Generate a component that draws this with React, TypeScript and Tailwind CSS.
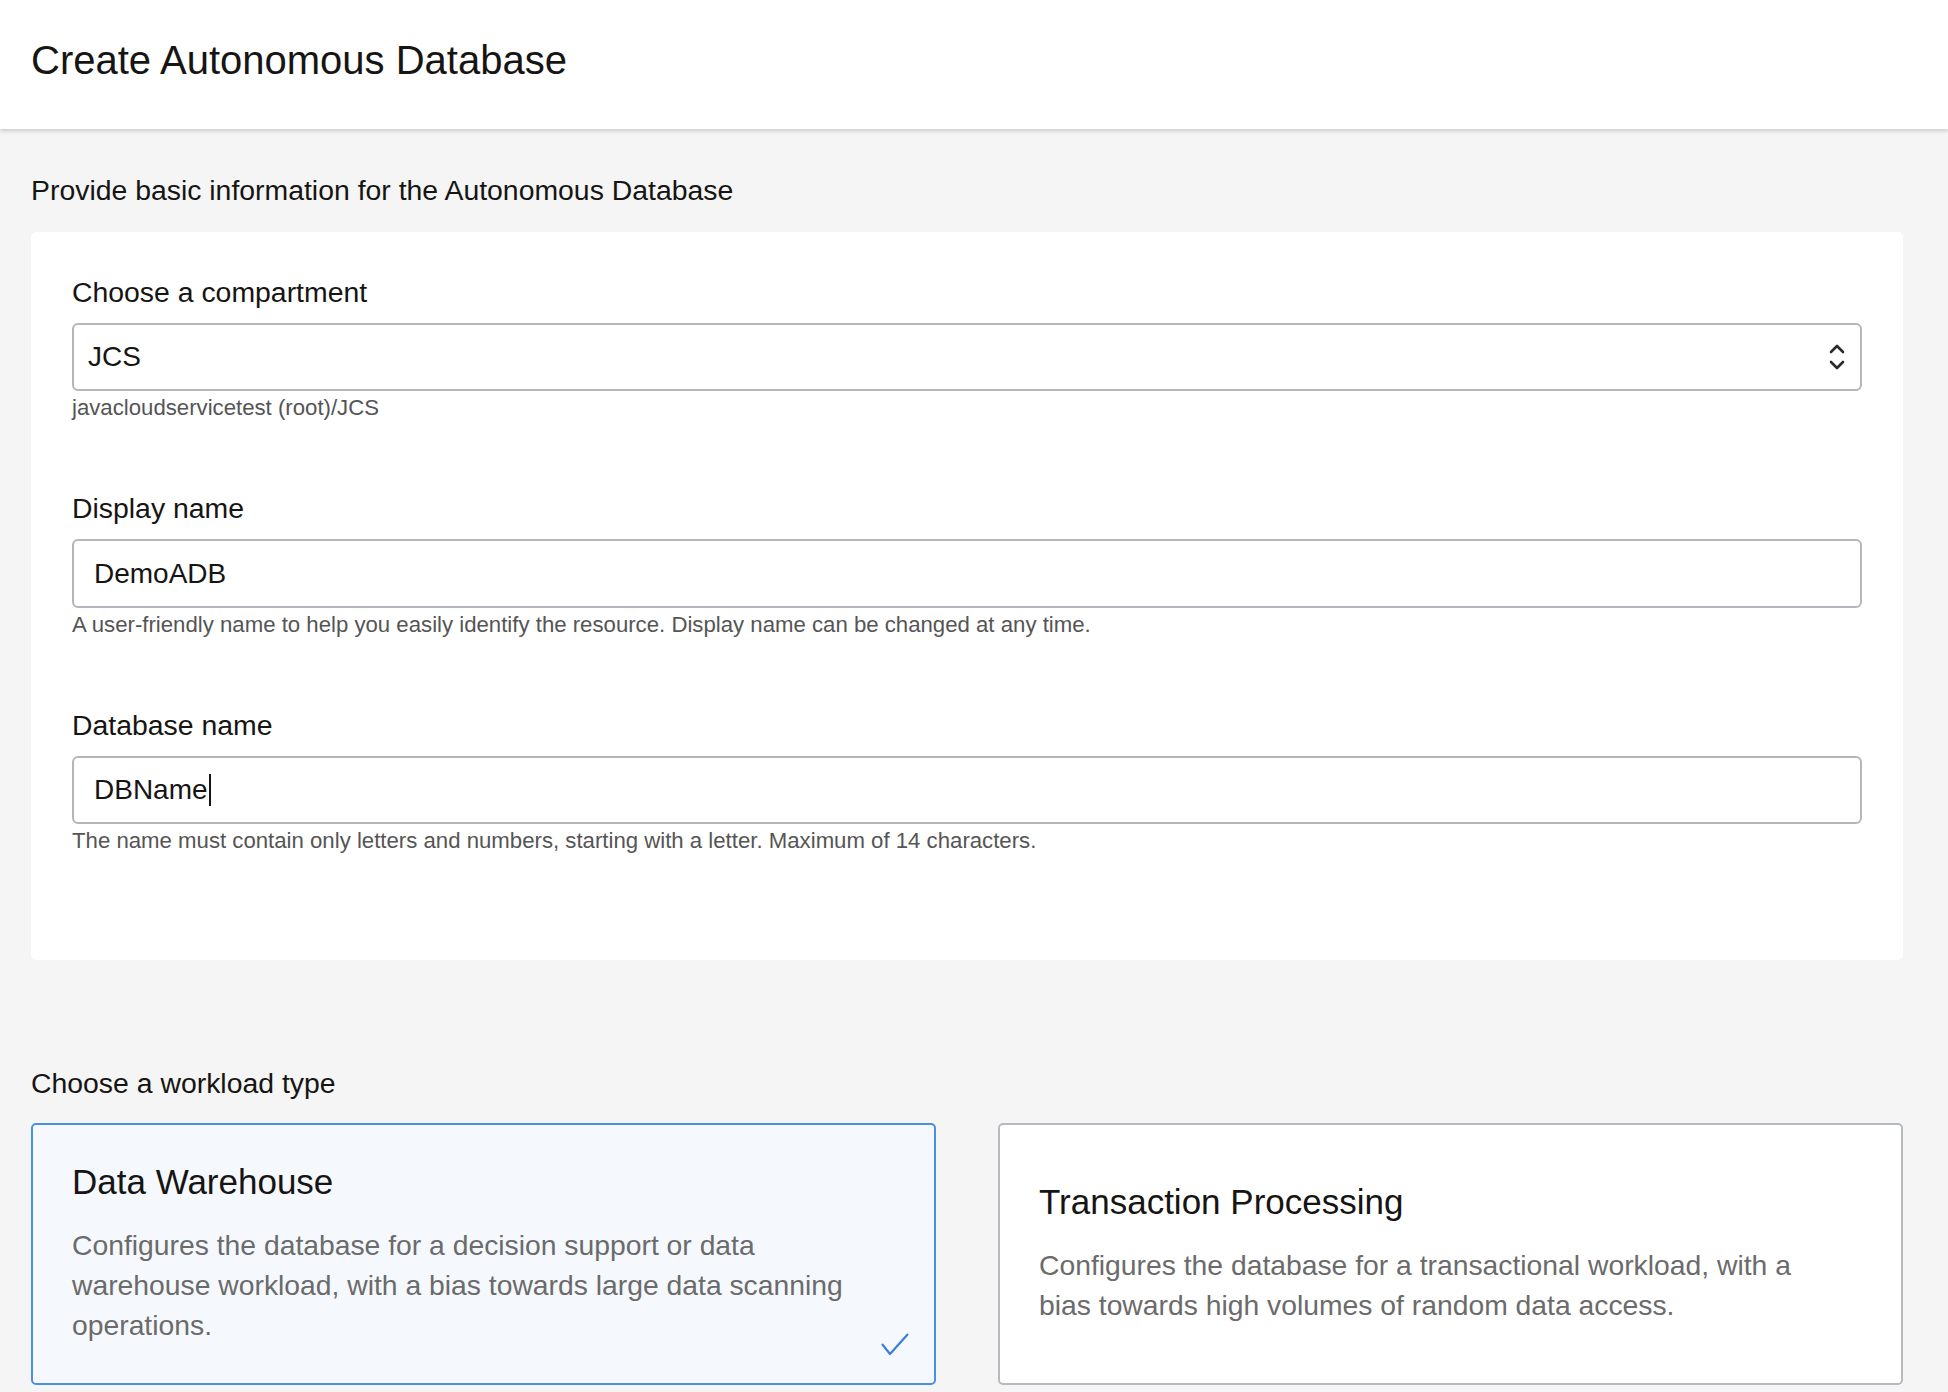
import React from 'react';

function UpDownIcon() {
  return (
    <svg width="18" height="28" viewBox="0 0 18 28" fill="none">
      <path d="M3 9 L9 3 L15 9" stroke="#2b2b2b" strokeWidth="2.6" strokeLinecap="round" strokeLinejoin="round" />
      <path d="M3 19 L9 25 L15 19" stroke="#2b2b2b" strokeWidth="2.6" strokeLinecap="round" strokeLinejoin="round" />
    </svg>
  );
}

function Field({
  label,
  help,
  children,
  className = '',
}: {
  label: string;
  help: string;
  children: React.ReactNode;
  className?: string;
}) {
  return (
    <div className={className}>
      <div className="text-[28.4px] leading-[28px] text-[#161513]">{label}</div>
      <div className="mt-[17px]">{children}</div>
      <div className="mt-[6px] text-[22.2px] leading-[22px] text-[#555]">{help}</div>
    </div>
  );
}

function WorkloadCard({
  title,
  description,
  selected,
}: {
  title: string;
  description: string;
  selected?: boolean;
}) {
  return (
    <div
      className={
        selected
          ? 'relative h-[262px] rounded-[5px] border-2 border-[#4a90e2] bg-[#f5f9fe] px-[39px] flex flex-col justify-center'
          : 'relative h-[262px] rounded-[5px] border-2 border-[#b6babe] bg-white px-[39px] flex flex-col justify-center'
      }
    >
      <div className="text-[35px] leading-[35px] text-[#161513]">{title}</div>
      <p className="mt-[26px] max-w-[795px] text-[28.3px] leading-[40px] text-[#6b6b6b]">{description}</p>
      {selected && (
        <svg className="absolute right-[24px] bottom-[27px]" width="30" height="24" viewBox="0 0 30 24" fill="none">
          <path d="M2 12 L10 22 L28 2" stroke="#3a7fd8" strokeWidth="2.2" strokeLinejoin="round" />
        </svg>
      )}
    </div>
  );
}

export default function App() {
  return (
    <main className="min-h-screen bg-[#f5f5f5] font-['Liberation_Sans',Arial,sans-serif]">
      {/* Header */}
      <header className="h-[129px] bg-white shadow-[0_2px_4px_rgba(0,0,0,0.18)] flex items-center pl-[31px] pb-[9px] relative z-10">
        <h1 className="text-[40px] leading-[40px] text-[#161513]">Create Autonomous Database</h1>
      </header>

      <div className="pl-[31px] pr-[45px] pt-[47px]">
        <h2 className="text-[28.4px] leading-[28px] text-[#161513]">
          Provide basic information for the Autonomous Database
        </h2>

        {/* Basic info panel */}
        <section className="mt-[28px] rounded-[5px] bg-white px-[41px] pt-[46px] pb-[108px]">
          <Field label="Choose a compartment" help="javacloudservicetest (root)/JCS">
            <div className="h-[68px] rounded-[6px] border-2 border-[#b3b7bc] flex items-center justify-between pl-[14px] pr-[14px]">
              <span className="text-[28px] text-[#161513]">JCS</span>
              <UpDownIcon />
            </div>
          </Field>

          <Field
            className="mt-[75px]"
            label="Display name"
            help="A user-friendly name to help you easily identify the resource. Display name can be changed at any time."
          >
            <div className="h-[69px] rounded-[6px] border-2 border-[#b3b7bc] flex items-center pl-[20px]">
              <span className="text-[28px] text-[#161513]">DemoADB</span>
            </div>
          </Field>

          <Field
            className="mt-[75px]"
            label="Database name"
            help="The name must contain only letters and numbers, starting with a letter. Maximum of 14 characters."
          >
            <div className="h-[68px] rounded-[6px] border-2 border-[#b3b7bc] flex items-center pl-[20px]">
              <span className="text-[28px] text-[#161513]">DBName</span>
              <span className="ml-[1px] h-[32px] w-[2px] bg-[#161513]" />
            </div>
          </Field>
        </section>

        <h2 className="mt-[109px] text-[28.4px] leading-[28px] text-[#161513]">Choose a workload type</h2>

        <div className="mt-[26px] grid grid-cols-2 gap-[62px]">
          <WorkloadCard
            selected
            title="Data Warehouse"
            description="Configures the database for a decision support or data warehouse workload, with a bias towards large data scanning operations."
          />
          <WorkloadCard
            title="Transaction Processing"
            description="Configures the database for a transactional workload, with a bias towards high volumes of random data access."
          />
        </div>
      </div>
    </main>
  );
}
